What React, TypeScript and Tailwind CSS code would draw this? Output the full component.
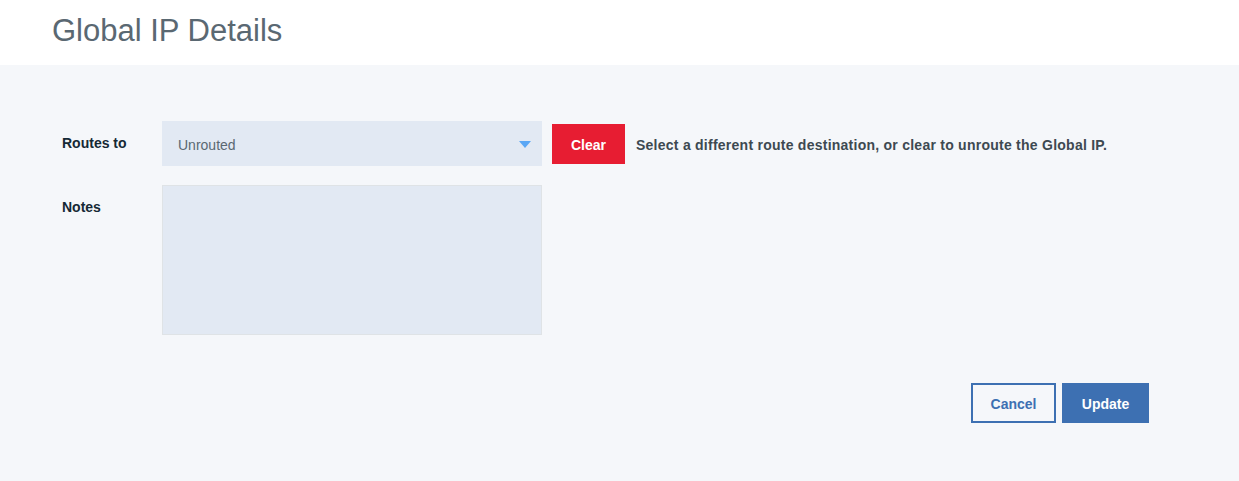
export default function App() {
  return (
    <div className="min-h-[481px] bg-[#f5f7fa] font-['Liberation_Sans',Arial,sans-serif] text-[#152935]">
      <div className="h-[65px] bg-white pl-[52px] pt-[12px]">
        <h1 className="text-[31px] leading-[38px] text-[#5a6872]">Global IP Details</h1>
      </div>

      <div className="px-[62px] pt-[56px]">
        <div className="flex items-center">
          <label className="w-[100px] text-[14px] font-bold">Routes to</label>
          <div className="flex h-[45px] w-[380px] items-center justify-between bg-[#e2e9f3] pl-[16px] pr-[11px]">
            <span className="mt-[4px] text-[14px] text-[#5a6872]">Unrouted</span>
            <svg width="12" height="7" viewBox="0 0 12 7" className="mt-[1px] fill-[#5aa7f5]">
              <path d="M0 0h12L6 7z" />
            </svg>
          </div>
          <button className="ml-[10px] h-[40px] w-[73px] bg-[#e71d32] pt-[4px] text-[14px] font-bold text-white">
            Clear
          </button>
          <p className="ml-[11px] mt-[3px] text-[14px] font-bold tracking-[0.25px] text-[#3d4951]">
            Select a different route destination, or clear to unroute the Global IP.
          </p>
        </div>

        <div className="mt-[19px] flex items-start">
          <label className="w-[100px] pt-[12px] text-[14px] font-bold">Notes</label>
          <textarea className="h-[150px] w-[380px] resize-none border border-[#dfe3e6] bg-[#e2e9f3] outline-none" />
        </div>

        <div className="mt-[48px] flex justify-end gap-[6px] pr-[28px]">
          <button className="h-[40px] w-[85px] border-2 border-[#3d70b2] pt-[2px] text-[14px] font-bold text-[#3d70b2]">
            Cancel
          </button>
          <button className="h-[40px] w-[87px] bg-[#3d70b2] pt-[2px] text-[14px] font-bold text-white">
            Update
          </button>
        </div>
      </div>
    </div>
  )
}
